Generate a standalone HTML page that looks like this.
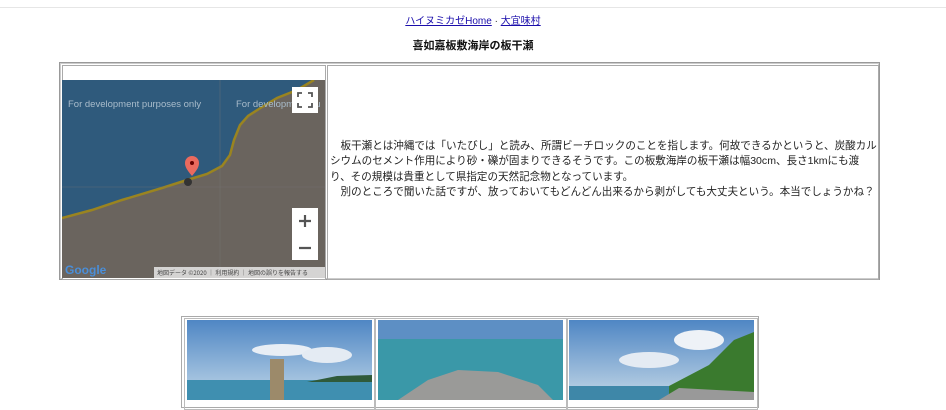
<!DOCTYPE html>
<html><head><meta charset="utf-8"><style>
body{margin:0;width:946px;height:400px;overflow:hidden;background:#fff;font-family:"Liberation Sans","Noto Sans CJK JP",sans-serif;position:relative}
.a{position:absolute}
.line{left:0;top:7px;width:946px;height:1px;background:#e6e6e6}
.nav{top:12px;left:0;width:946px;text-align:center;font-size:10px;color:#333}
.nav a{color:#1a0dab;text-decoration:underline}
.ttl{top:37px;left:0;width:946px;text-align:center;font-size:11px;font-weight:bold;color:#111}
.tbl{left:59px;top:62px;width:819px;height:216px;border:1px solid #999;box-shadow:inset 0 0 0 1px #ccc}
.c1{left:62px;top:65px;width:262px;height:213px;border:1px solid #aaa;background:#fff}
.c2{left:327px;top:65px;width:550px;height:213px;border:1px solid #aaa}
.txt{left:330px;top:139px;font-size:10.55px;line-height:15.4px;color:#222;white-space:nowrap}
.ph{top:316px;left:181px;width:576px;height:90px;border:1px solid #aaa}
.cell{top:318px;height:90px;border:1px solid #bbb;overflow:hidden}
</style></head><body>
<div class="a line"></div>
<div class="a nav"><a>ハイヌミカゼHome</a> · <a>大宜味村</a></div>
<div class="a ttl">喜如嘉板敷海岸の板干瀬</div>
<div class="a tbl"></div>
<div class="a c1"></div>
<div class="a c2"></div>
<svg class="a" style="left:62px;top:80px" width="263" height="198" viewBox="0 0 263 198">
<rect width="263" height="198" fill="#2f5a7c"/>
<path d="M0 138 L30 130 L60 120 L100 108 L125 100 L145 94 L160 86 L168 75 L172 60 L178 45 L186 36 L200 27 L215 18 L235 10 L252 0 L263 0 L263 198 L0 198Z" fill="#6a645e"/>
<path d="M0 138 L30 130 L60 120 L100 108 L125 100 L145 94 L160 86 L168 75 L172 60 L178 45 L186 36 L200 27 L215 18 L235 10 L252 0" fill="none" stroke="#9a8420" stroke-width="2.5"/>
<line x1="158" y1="0" x2="158" y2="198" stroke="#777" stroke-width="0.6" opacity=".6"/>
<line x1="0" y1="107" x2="263" y2="107" stroke="#777" stroke-width="0.6" opacity=".6"/>
<text x="6" y="27" font-size="9.5" fill="#a9bccb" font-family="Liberation Sans">For development purposes only</text>
<text x="174" y="27" font-size="9.5" fill="#a9bccb" font-family="Liberation Sans">For development pu</text>
<path d="M130 96 c-5 -6 -7 -9 -7 -13 a7 7 0 0 1 14 0 c0 4 -2 7 -7 13z" fill="#ea6a5e"/>
<circle cx="130" cy="83" r="2" fill="#600"/>
<circle cx="126" cy="102" r="4" fill="#333"/>
<rect x="230" y="7" width="26" height="26" fill="#fff"/>
<path d="M236 17v-4h4M246 13h4v4M250 23v4h-4M240 27h-4v-4" stroke="#555" stroke-width="1.8" fill="none"/>
<rect x="230" y="128" width="26" height="52" fill="#fff"/>
<path d="M237 141h12M243 135v12M237 168h12" stroke="#555" stroke-width="2.2"/>
<text x="3" y="194" font-size="12" font-weight="bold" fill="#4a8ed8" font-family="Liberation Sans">Google</text>
<rect x="92" y="187" width="171" height="11" fill="#e8e8e8" opacity=".85"/>
<text x="95" y="195" font-size="6" fill="#444" font-family="Noto Sans CJK JP">地図データ ©2020 ｜ 利用規約 ｜ 地図の誤りを報告する</text>
</svg>
<div class="a txt">　板干瀬とは沖縄では「いたびし」と読み、所謂ビーチロックのことを指します。何故できるかというと、炭酸カル<br>シウムのセメント作用により砂・礫が固まりできるそうです。この板敷海岸の板干瀬は幅30cm、長さ1kmにも渡<br>り、その規模は貴重として県指定の天然記念物となっています。<br>　別のところで聞いた話ですが、放っておいてもどんどん出来るから剥がしても大丈夫という。本当でしょうかね？</div>
<div class="a ph"></div>
<div class="a cell" style="left:184px;width:189px"></div>
<div class="a cell" style="left:375px;width:190px"></div>
<div class="a cell" style="left:567px;width:189px"></div>
<svg class="a" style="left:187px;top:320px" width="185" height="80"><defs><linearGradient id="s1" x1="0" y1="0" x2="0" y2="1"><stop offset="0" stop-color="#4f86c4"/><stop offset="1" stop-color="#a6c4e0"/></linearGradient></defs><rect width="185" height="62" fill="url(#s1)"/><ellipse cx="95" cy="30" rx="30" ry="6" fill="#e8eef5"/><ellipse cx="140" cy="35" rx="25" ry="8" fill="#e4ebf3"/><rect y="60" width="185" height="20" fill="#3f8fb0"/><path d="M120 62 L150 56 L185 55 L185 62Z" fill="#2f5a3a"/><rect x="83" y="39" width="14" height="41" fill="#9c8a6a"/></svg>
<svg class="a" style="left:378px;top:320px" width="185" height="80"><rect width="185" height="20" fill="#5d8fc4"/><rect y="19" width="185" height="61" fill="#3a98a8"/><path d="M20 80 L50 60 L80 50 L120 52 L160 65 L175 80Z" fill="#9a9a98"/></svg>
<svg class="a" style="left:569px;top:320px" width="185" height="80"><defs><linearGradient id="s3" x1="0" y1="0" x2="0" y2="1"><stop offset="0" stop-color="#4f86c4"/><stop offset="1" stop-color="#b4cde2"/></linearGradient></defs><rect width="185" height="70" fill="url(#s3)"/><ellipse cx="130" cy="20" rx="25" ry="10" fill="#eef2f7"/><ellipse cx="80" cy="40" rx="30" ry="8" fill="#e4ebf3"/><rect y="66" width="185" height="14" fill="#3e87a8"/><path d="M100 66 L140 45 L165 20 L185 12 L185 80 L100 80Z" fill="#3a7a2e"/><path d="M90 80 L110 68 L185 72 L185 80Z" fill="#999"/></svg>
</body></html>
